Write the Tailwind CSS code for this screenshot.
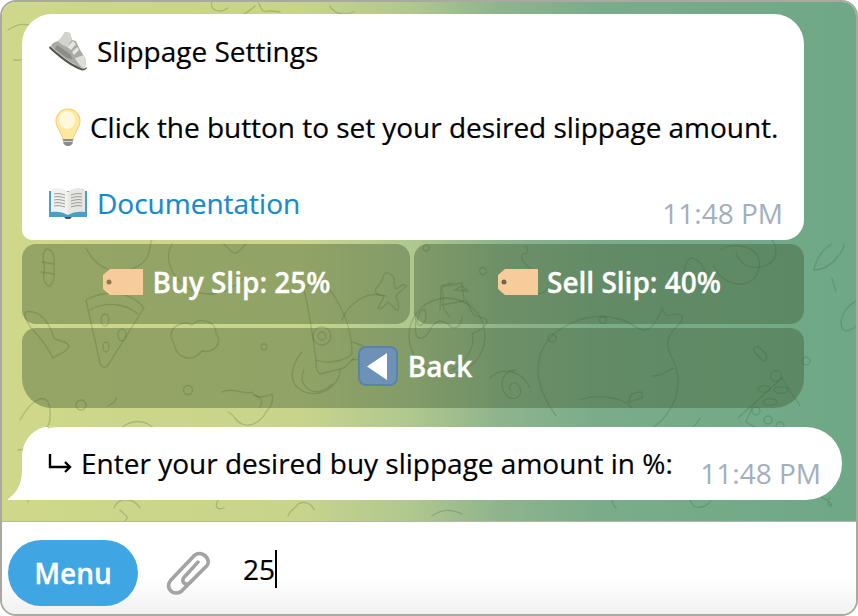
<!DOCTYPE html>
<html lang="en">
<head>
  <meta charset="UTF-8" />
  <title>Slippage Settings</title>
  <script src="https://cdn.jsdelivr.net/npm/@tailwindcss/browser@4"></script>
</head>
<body class="bg-white font-['Open_Sans',sans-serif]">
  <main class="w-[858px] h-[616px] flex flex-col overflow-hidden rounded-[16px] border-2 border-[#a8a99f] bg-white">

    <!-- Chat area -->
    <section class="relative h-[520px] shrink-0 overflow-hidden border-b border-[#b5b8a5] bg-[linear-gradient(90deg,#cfd88a_0%,#c8d48b_35%,#b0c78f_48%,#8fb48d_58%,#7aac8a_70%,#6ea887_100%)]">
      <!-- Wallpaper doodles -->
      <svg class="absolute left-0 top-0" width="854" height="520" viewBox="2 2 854 520" fill="none" stroke="#3c5f32" stroke-opacity="0.25" stroke-width="1.3" stroke-linecap="round" stroke-linejoin="round">
        <path d="M8 30c14-10 32-6 30 8s-12 24-24 22"/><path d="M205 14c20 10 40 2 50-8M212 2c-3 8 8 12 16 6"/><path d="M330 6c4 8 14 10 24 6M258 2c8 16 2 6 22 10"/>
        <path d="M44 252c-3 6 2 12 0 20s3 14 5 14 6-6 5-14 2-16-2-20-6-4-8 0Z"/><path d="M42 262l12 2M41 272l13 2"/>
        <path d="M86 300c18-10 44-10 58 8l-36 57c-3 4-7 2-8-2Z"/><path d="M90 310c14-8 34-8 48 4"/><ellipse cx="105" cy="320" rx="4" ry="6"/><ellipse cx="122" cy="335" rx="4" ry="6"/><ellipse cx="106" cy="347" rx="3" ry="5"/>
        <path d="M26 312c14-3 24 12 28 26 5 4 12 2 15 8-3 8-12 8-16 12-6-12-14-22-22-30-4-6-8-14-5-16Z"/>
        <path d="M174 343c-10-14 8-24 18-18 8-8 24-4 24 8 8 12-4 20-14 18-10 12-26 8-28-8Z"/>
        <path d="M86 248c10 20 28 28 48 20s14-24 18-28"/><path d="M172 244c-8 14-2 32 16 44 18 10 38 8 56-10"/><path d="M224 244c6 6 10 12 14 8l8-8"/>
        <path d="M304 290c6 24 8 42 12 70 8 4 28 2 36-6 0-22-6-46-30-74-8 0-14 4-18 10Z"/><circle cx="322" cy="336" r="9"/><circle cx="322" cy="336" r="4"/><path d="M316 360c0 8 0 10 4 14l24-6 10-10"/><path d="M352 342c8 2 14 6 16 10-4 6-10 8-16 8"/>
        <path d="M302 352c-10 12-14 28-4 36s26 8 36-4c4-4 6-10 6-14"/><path d="M304 370c-4 8-2 16 6 20s16 0 22-6"/>
        <path d="M378 286c6-6 4-10 8-14 6 2 10 6 8 12 2 4 0 6 4 4 4-4 8-4 8-2-2 4-8 6-10 10 2 6 4 10 2 14-4 0-6-6-10-8-4 4-6 8-10 6 2-6 6-8 6-12-6 0-12-4-6-10Z"/>
        <path d="M342 320c6-16 24-30 44-24"/><circle cx="264" cy="347" r="3"/><circle cx="188" cy="390" r="4.5"/><circle cx="81" cy="405" r="5"/>
        <path d="M20 420c12-22 28-30 30-10s-8 20-14 30c-4 8-12 10-18 10"/>
        <path d="M222 392c10-6 24 4 30 0 4 8 16 4 20 2 2 8-2 14-6 18-4 8-14 16-24 12-6-2-8-10-14-12"/><path d="M254 395c6 2 10 6 6 12"/>
        <path d="M118 432c10-14 30-14 38 0M108 406c0 0 8-4 8-8"/>
        <path d="M450 317c-12-14-4-8-8-30l20-4 2 18-22 4"/><path d="M452 283l-11 3-1 24"/><path d="M454 290l8-4 6 5Z"/>
        <circle cx="447" cy="336" r="38"/><path d="M414 312c4 8 0 14 2 22s10 4 14-4 10-12 18-6c6 8 14 2 14-8M466 300c4 6 4 14 10 16s14 2 10 8-10 8-14 10c4 14-8 30-20 36"/><circle cx="483" cy="271" r="3.5"/><circle cx="426" cy="248" r="3"/><path d="M422 310c-4 4-6 10-4 14s8-2 8-6 0-10-4-8Z"/>
        <path d="M548 288c-4 4-10 8-14 4-6-8-6-14-2-22-6-6-12-8-10-16 8 0 6-2 4-8"/><circle cx="603" cy="320" r="3.5"/><circle cx="552" cy="338" r="4"/>
        <path d="M556 416c-14-20-24-42-14-66 12-24 44-38 72-32 18 2 24 14 32 12 8-2 14-16 16-22 2 6 4 10 12 6 4 0 10 0 8 6-4 8-16 12-14 28 4 14 10 16 10 34 0 22-16 46-40 52"/>
        <path d="M652 376c12 0 14-6 22-8M580 400c16-6 42-4 52 8M630 398c0-6 8-6 12-6l0 6-14 4Z"/>
        <path d="M516 370c-10 0-18 10-12 22s20 6 16-4-12-4-10 2"/><path d="M530 388c-8-18-28-22-40-10"/>
        <path d="M736 252c4 14 16 18 28 14 14-4 14-18 8-26M690 258c8 0 18 10 14 22-6-4-14-4-20-2 0-8 2-16 6-20Z"/><path d="M720 250c14-8 32-4 38 6 4 14-2 28-18 28-12 0-22-8-26-18"/>
        <path d="M762 360c-6-6-10-10-8-12l4-2 8 8c2 6-2 8-4 6Z"/><circle cx="776" cy="376" r="5.5"/><ellipse cx="764" cy="389" rx="6" ry="3.2"/><ellipse cx="781" cy="390" rx="7" ry="3.4"/><ellipse cx="770" cy="402" rx="7" ry="3.4"/>
        <path d="M738 418l44-40 18 28M752 408l-6 14 14 8"/><circle cx="756" cy="411" r="4"/><circle cx="768" cy="420" r="4"/><circle cx="780" cy="426" r="4"/>
        <path d="M832 244c-8 4-16 14-18 26 10 0 18-6 24-14 4-4 6-8 6-12"/><path d="M858 300c-12 6-20 18-16 28 4 6 10 2 16-4M836 292l-4-14"/>
        <path d="M806 357a4 4 0 1 0 .1 0Z"/>
        <path d="M28 502c-3-18-2-28 4-30M114 508c4-12 20-10 26 0M218 500c-4 8 0 10 6 8M120 510c8 8 10 6 4 12"/>
        <path d="M700 418c-8 16-28 22-48 14M788 500c16-10 40-4 44 6M815 486c8-6 14-8 22-6M830 498c-4 4-2 8 2 8"/>
        <path d="M616 508c-6-6-4-14 2-18l8 8M692 504c-6-8 0-22 10-24s14 8 10 18-16 12-20 6ZM702 494c4 4 10 2 12-2"/>
        <path d="M432 516c8-6 18-8 30-2M288 516c2-6 8-8 10-12 6-4 14 0 16 6"/>
      </svg>

      <div class="relative flex flex-col pl-[20px] pt-[12px]">
        <!-- Bot message -->
        <div class="relative w-[782px] h-[226px] rounded-t-[30px] rounded-bl-[10px] rounded-br-[20px] bg-white pl-[26px] pt-[18px] text-[28px] leading-[38px] text-black [-webkit-text-stroke:0.2px]">
          <div class="flex items-center h-[38px]">
            <svg width="40" height="40" viewBox="0 0 40 40" class="shrink-0">
              <path d="M17 1l5 1 2 7 4 1 3 7 6 10c2 4 1 9-2 10-4 0-9-4-14-7C15 26 8 21 3 15c1-3 4-4 7-5 3-2 5-6 7-9Z" fill="#a9a9a6"/>
              <path d="M17 1l5 1 2 7-5 7c-3-1-7-3-9-6 3-2 5-6 7-9Z" fill="#d2d2cf"/>
              <path d="M19 16l6-6 3 3-5 6ZM24 21l5-5 2 3-5 5Z" fill="#e4e4e1"/>
              <path d="M9 14l13 9 3 5-6-1-12-9Z" fill="#8c8c89"/>
              <path d="M27 27l9-3 2 6c0 3-1 6-3 7-3-2-6-6-8-10Z" fill="#dcdcd9"/>
              <path d="M2 15c8 8 20 17 29 21 4 2 6 2 7 0l1 1c-2 3-5 3-9 1C21 34 9 25 1 17Z" fill="#55554f"/>
            </svg>
            <span class="ml-[9px]">Slippage Settings</span>
          </div>
          <div class="flex items-center h-[38px] mt-[38px]">
            <svg width="28" height="40" viewBox="0 0 28 40" class="shrink-0 ml-[6px]">
              <path d="M14 2C6 2 2 8 2 14c0 7 6 11 7 19h10c1-8 7-12 7-19 0-6-4-12-12-12Z" fill="#ffe9a0" stroke="#f2c96d" stroke-width="1"/>
              <ellipse cx="13" cy="13" rx="8" ry="9" fill="#fff8dc"/>
              <path d="M9 32h10l-.5 5-3 2h-3l-3-2Z" fill="#8c8c8c"/>
              <path d="M9.500 34h9v1h-9Z" fill="#d4d4d4"/>
            </svg>
            <span class="ml-[8px] tracking-[-0.04px]">Click the button to set your desired slippage amount.</span>
          </div>
          <div class="flex items-center h-[38px] mt-[38px] text-[#168acd]">
            <svg width="40" height="34" viewBox="0 0 40 34" class="shrink-0">
              <path d="M1 5h38v26H23l-3 2-3-2H1Z" fill="#4d9ec4"/>
              <path d="M3 3c6-2 12-1 17 3v23c-5-3-11-4-17-3Z" fill="#f1f1ef"/>
              <path d="M37 3c-6-2-12-1-17 3v23c5-3 11-4 17-3Z" fill="#e6e6e3"/>
              <path d="M6 8c4-1 8 0 11 1M6 11c4-1 8 0 11 1M6 14c4-1 8 0 11 1M6 17c4-1 8 0 11 1M6 20c4-1 8 0 11 1M23 9c3-1 7-2 11-1M23 12c3-1 7-2 11-1M23 15c3-1 7-2 11-1M23 18c3-1 7-2 11-1M23 21c3-1 7-2 11-1" stroke="#9a9a98" stroke-width="1" fill="none"/>
              <path d="M16 31h8l-2 2h-4Z" fill="#3e5560"/>
            </svg>
            <span class="ml-[9px]">Documentation</span>
          </div>
          <span class="absolute right-[21px] bottom-[8px] leading-[38px] text-[#a2afbc] [-webkit-text-stroke:0px]">11:48 PM</span>
        </div>

        <!-- Inline keyboard -->
        <div class="mt-[4px] flex w-[782px] gap-[4px]">
          <button class="flex h-[80px] flex-1 items-center justify-center gap-[9px] rounded-[14px] bg-[#3f5a2f]/40 pb-[5px] pl-[2px] text-[28px] font-semibold leading-[38px] text-white [-webkit-text-stroke:0.3px]">
            <svg width="40" height="26" viewBox="0 0 40 26"><path d="M7 0h33v26H7L0 20V6Z" fill="#f8cb9b"/><circle cx="6" cy="13" r="2.500" fill="#8d7a55"/></svg>
            <span>Buy Slip: 25%</span>
          </button>
          <button class="flex h-[80px] w-[390px] items-center justify-center gap-[9px] rounded-[14px] bg-[#3f5a2f]/40 pb-[5px] pl-[1px] text-[28px] font-semibold leading-[38px] text-white [-webkit-text-stroke:0.3px]">
            <svg width="40" height="26" viewBox="0 0 40 26"><path d="M7 0h33v26H7L0 20V6Z" fill="#f8cb9b"/><circle cx="6" cy="13" r="2.500" fill="#6f6650"/></svg>
            <span>Sell Slip: 40%</span>
          </button>
        </div>
        <button class="mt-[4px] flex h-[80px] w-[782px] items-center justify-center gap-[10px] rounded-t-[14px] rounded-b-[30px] bg-[#3f5a2f]/40 pb-[5px] pl-[4px] text-[28px] font-semibold leading-[38px] text-white [-webkit-text-stroke:0.3px]">
          <svg width="40" height="40" viewBox="0 0 40 40"><rect width="40" height="40" rx="8" fill="#5b82a8"/><rect x="2" y="2" width="36" height="36" rx="6" fill="#6d92b6"/><path d="M29 7v27L9 20.500Z" fill="#fff"/></svg>
          <span>Back</span>
        </button>

        <!-- Force-reply prompt -->
        <div class="relative mt-[19px] flex h-[73px] w-[820px] items-start rounded-t-[36px] rounded-br-[36px] bg-white pl-[26px] pt-[17px] text-[28px] leading-[38px] text-black [-webkit-text-stroke:0.2px]">
          <svg class="absolute -left-[14px] bottom-0" width="40" height="73" viewBox="0 0 40 73"><path d="M40 0H36C22 4 14 16 14 30v14c0 12-5 22-14 28l0 1H40Z" fill="#fff"/></svg>
          <span class="relative flex items-center">
            <svg width="24" height="20" viewBox="0 0 24 20" fill="none" stroke="#000" stroke-width="2.400" class="mr-[9px]"><path d="M2 1v13h20M17 9l5 5-5 5"/></svg>
            Enter your desired buy slippage amount in %:
          </span>
          <span class="absolute right-[21px] bottom-[8px] text-[#a2afbc] [-webkit-text-stroke:0px]">11:48 PM</span>
        </div>
      </div>
    </section>

    <!-- Input bar -->
    <footer class="flex flex-1 items-center bg-[linear-gradient(180deg,#ffffff_60%,#f1f1f1_100%)] pl-[6px] pb-[2px]">
      <button class="mt-[12px] h-[66px] w-[130px] rounded-[33px] bg-[#3fa6e3] text-[28px] font-semibold text-white [-webkit-text-stroke:0.3px]">Menu</button>
      <svg class="ml-[27px] mt-[12px] shrink-0" width="50" height="55" viewBox="0 0 44 48" fill="none" stroke="#a3a3a3" stroke-width="3.200" stroke-linecap="round" stroke-linejoin="round">
        <path d="M29 14 17 27c-4 5 2 8 5 5L37 17c4-6-5-14-11-9L5 30c-5 7 2 14 9 10L24 30"/>
      </svg>
      <div class="ml-[28px] mt-[4px] flex items-center text-[28px] leading-[38px] text-black [-webkit-text-stroke:0.2px]">
        <span>25</span><span class="h-[38px] w-[1.500px] bg-black"></span>
      </div>
    </footer>
  </main>
</body>
</html>
